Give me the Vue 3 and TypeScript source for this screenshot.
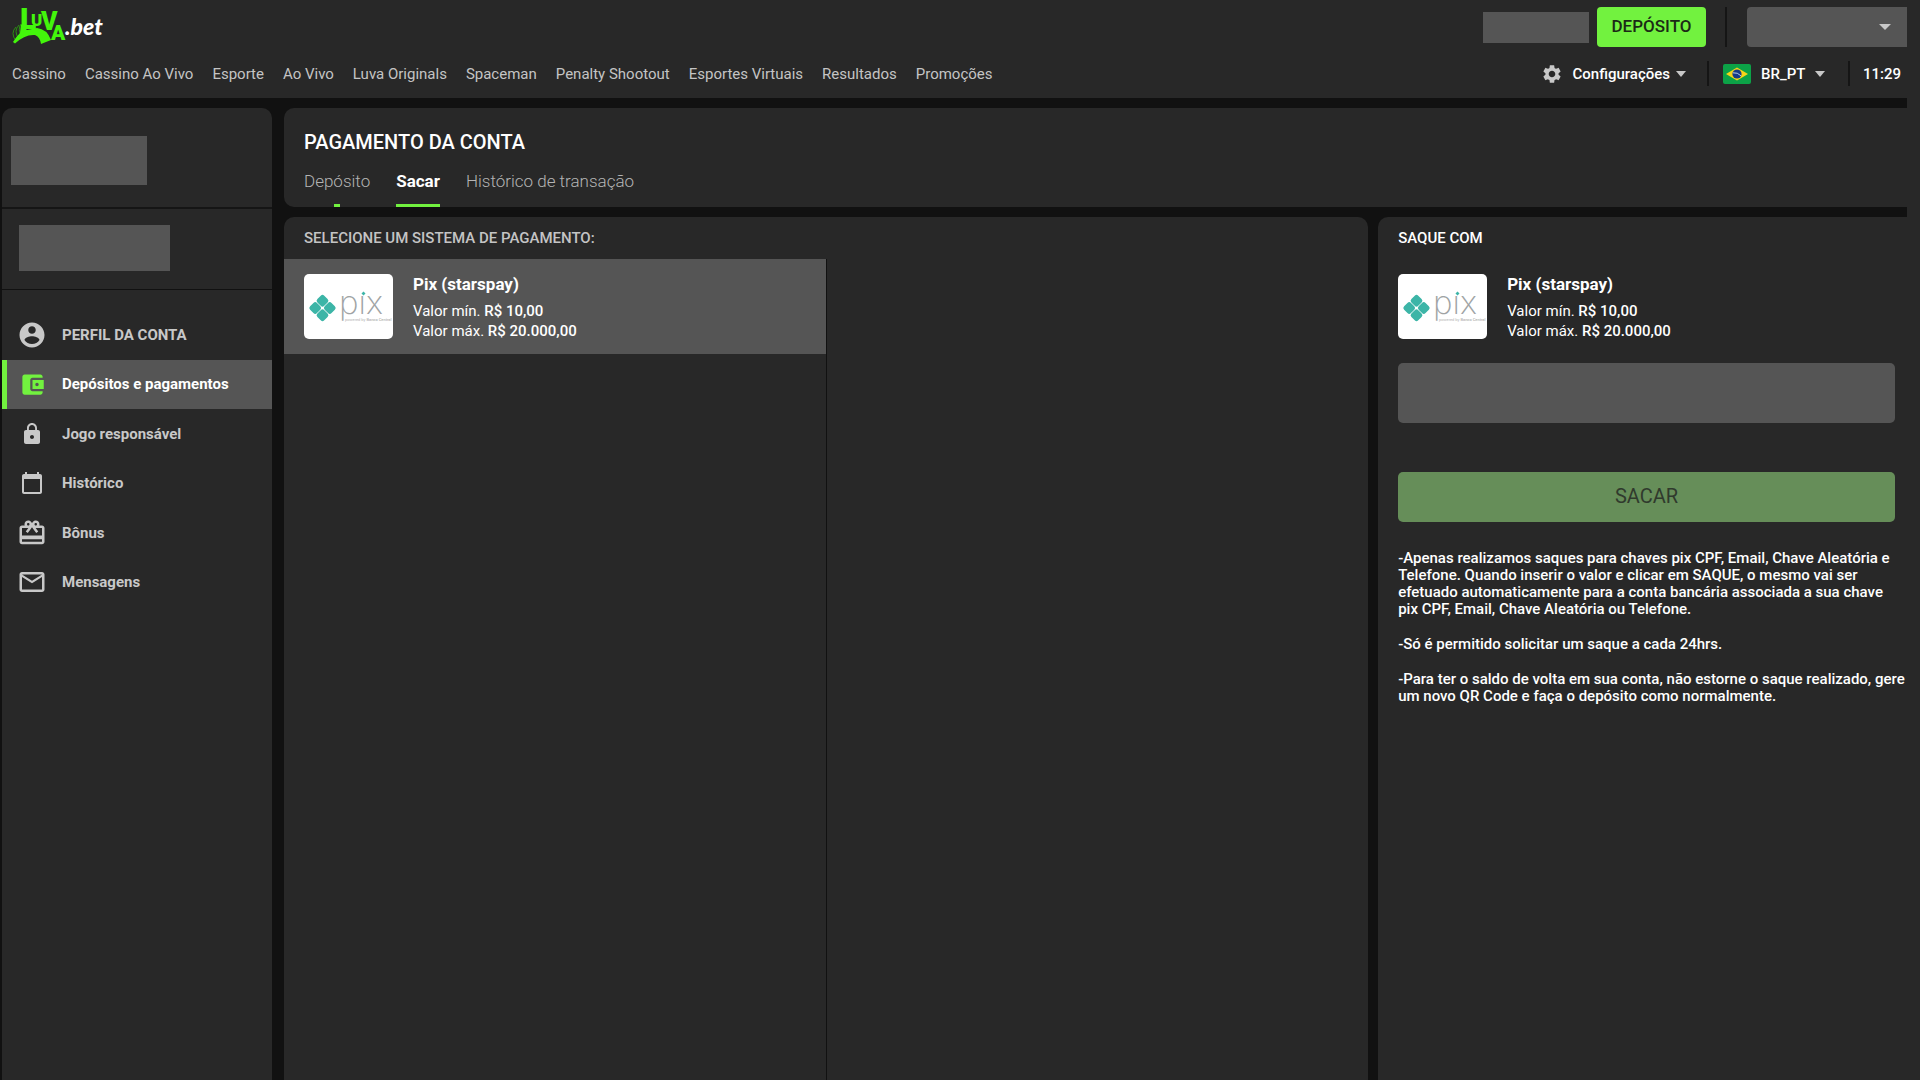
<script setup lang="ts">
import { ref } from 'vue'

interface MenuItem {
  label: string
  size: number
  path: string
  active?: boolean
}

const navLinks: string[] = [
  'Cassino',
  'Cassino Ao Vivo',
  'Esporte',
  'Ao Vivo',
  'Luva Originals',
  'Spaceman',
  'Penalty Shootout',
  'Esportes Virtuais',
  'Resultados',
  'Promoções',
]

const menu: MenuItem[] = [
  {
    label: 'PERFIL DA CONTA',
    size: 30,
    path: 'M12 2C6.48 2 2 6.48 2 12s4.48 10 10 10 10-4.48 10-10S17.52 2 12 2zm0 3c1.66 0 3 1.34 3 3s-1.34 3-3 3-3-1.34-3-3 1.34-3 3-3zm0 14.2c-2.5 0-4.71-1.28-6-3.22.03-1.99 4-3.08 6-3.08 1.99 0 5.97 1.09 6 3.08-1.29 1.94-3.5 3.22-6 3.22z',
  },
  {
    label: 'Depósitos e pagamentos',
    size: 27,
    active: true,
    path: 'M21 18v1c0 1.1-.9 2-2 2H5c-1.11 0-2-.9-2-2V5c0-1.1.89-2 2-2h14c1.1 0 2 .9 2 2v1h-9c-1.11 0-2 .9-2 2v8c0 1.1.89 2 2 2h9zm-9-2h10V8H12v8zm4-2.5c-.83 0-1.5-.67-1.5-1.5s.67-1.5 1.5-1.5 1.5.67 1.5 1.5-.67 1.5-1.5 1.5z',
  },
  {
    label: 'Jogo responsável',
    size: 24,
    path: 'M18 8h-1V6c0-2.76-2.24-5-5-5S7 3.24 7 6v2H6c-1.1 0-2 .9-2 2v10c0 1.1.9 2 2 2h12c1.1 0 2-.9 2-2V10c0-1.1-.9-2-2-2zm-6 9c-1.1 0-2-.9-2-2s.9-2 2-2 2 .9 2 2-.9 2-2 2zm3.1-9H8.9V6c0-1.71 1.39-3.1 3.1-3.1 1.71 0 3.1 1.39 3.1 3.1v2z',
  },
  {
    label: 'Histórico',
    size: 24,
    path: 'M20 3h-1V1h-2v2H7V1H5v2H4c-1.1 0-2 .9-2 2v16c0 1.1.9 2 2 2h16c1.1 0 2-.9 2-2V5c0-1.1-.9-2-2-2zm0 18H4V8h16v13z',
  },
  {
    label: 'Bônus',
    size: 30,
    path: 'M20 6h-2.18c.11-.31.18-.65.18-1 0-1.66-1.34-3-3-3-1.05 0-1.96.54-2.5 1.35l-.5.67-.5-.68C10.96 2.54 10.05 2 9 2 7.34 2 6 3.34 6 5c0 .35.07.69.18 1H4c-1.11 0-1.99.89-1.99 2L2 19c0 1.11.89 2 2 2h16c1.11 0 2-.89 2-2V8c0-1.11-.89-2-2-2zm-5-2c.55 0 1 .45 1 1s-.45 1-1 1-1-.45-1-1 .45-1 1-1zM9 4c.55 0 1 .45 1 1s-.45 1-1 1-1-.45-1-1 .45-1 1-1zm11 15H4v-2h16v2zm0-5H4V8h5.08L7 10.83 8.62 12 11 8.76l1-1.36 1 1.36L15.38 12 17 10.83 14.92 8H20v6z',
  },
  {
    label: 'Mensagens',
    size: 30,
    path: 'M20 4H4c-1.1 0-1.99.9-1.99 2L2 18c0 1.1.9 2 2 2h16c1.1 0 2-.9 2-2V6c0-1.1-.9-2-2-2zm0 14H4V8l8 5 8-5v10zm-8-7L4 6h16l-8 5z',
  },
]

const tabs: string[] = ['Depósito', 'Sacar', 'Histórico de transação']
const activeTab = ref('Sacar')
const language = ref('BR_PT')
const amount = ref('')
</script>

<template>
  <div class="shell">
    <svg class="defs" width="0" height="0" aria-hidden="true">
      <symbol id="pix-logo" viewBox="0 0 89 65">
        <g fill="#3cb5a7" transform="translate(18.5 34) rotate(45)">
          <rect x="-10" y="-10" width="9.7" height="9.7" rx="2.5" />
          <rect x="0.3" y="-10" width="9.7" height="9.7" rx="2.5" />
          <rect x="-10" y="0.3" width="9.7" height="9.7" rx="2.5" />
          <rect x="0.3" y="0.3" width="9.7" height="9.7" rx="2.5" />
        </g>
        <text x="35" y="40" font-family="Inter, sans-serif" font-size="33" font-weight="200" fill="#a0a4a5">pix</text>
        <rect x="56" y="10" width="8" height="11" fill="#fff" />
        <path d="M59.500 17.600l2 1.900-2 1.900-2-1.900z" fill="#3cb5a7" />
        <text x="41" y="47" font-size="4" fill="#b4b4b4">powered by <tspan font-weight="500">Banco Central</tspan></text>
      </symbol>
    </svg>

    <header class="header">
      <div class="top-row">
        <a class="logo" href="#" aria-label="Luva.bet">
          <svg width="92" height="42" viewBox="0 0 92 42" aria-hidden="true">
            <g fill="none" stroke="#2c8f12" stroke-width="1">
              <path d="M5 37Q-1 29 5 23" />
              <path d="M8 35Q2 27 8 21" />
              <path d="M11 33Q6 25 10 20" />
            </g>
            <path fill="#43f60b" d="M10 20l-1 9Q5 33 2 38l2 1.500Q14 30 24 31Q29 33 30 40L40 36Q36 25 26 24L16 26z" />
            <text class="mark" x="9" y="25"><tspan font-size="30">L</tspan><tspan x="20" y="22" font-size="17">U</tspan><tspan x="30" y="26" font-size="25">V</tspan><tspan x="40" y="36" font-size="21">A</tspan></text>
            <text class="tld" x="54" y="31" font-size="23">.bet</text>
          </svg>
        </a>
        <div class="account">
          <span class="balance"></span>
          <button class="deposit" type="button">DEPÓSITO</button>
          <span class="rule tall"></span>
          <button class="user" type="button" aria-label="Conta"><span class="caret large"></span></button>
        </div>
      </div>
      <div class="nav-row">
        <nav class="nav">
          <a v-for="link in navLinks" :key="link" href="#">{{ link }}</a>
        </nav>
        <div class="prefs">
          <button class="settings" type="button">
            <svg width="22" height="22" viewBox="0 0 24 24" fill="#c8c8c8" aria-hidden="true">
              <path d="M19.14 12.94c.04-.3.06-.61.06-.94 0-.32-.02-.64-.07-.94l2.03-1.58c.18-.14.23-.41.12-.61l-1.92-3.32c-.12-.22-.37-.29-.59-.22l-2.39.96c-.5-.38-1.03-.7-1.62-.94l-.36-2.54c-.04-.24-.24-.41-.48-.41h-3.84c-.24 0-.43.17-.47.41l-.36 2.54c-.59.24-1.13.57-1.62.94l-2.39-.96c-.22-.08-.47 0-.59.22L2.74 8.87c-.12.21-.08.47.12.61l2.03 1.58c-.05.3-.09.63-.09.94s.02.64.07.94l-2.03 1.58c-.18.14-.23.41-.12.61l1.92 3.32c.12.22.37.29.59.22l2.39-.96c.5.38 1.03.7 1.62.94l.36 2.54c.05.24.24.41.48.41h3.84c.24 0 .44-.17.47-.41l.36-2.54c.59-.24 1.13-.56 1.62-.94l2.39.96c.22.08.47 0 .59-.22l1.92-3.32c.12-.22.07-.47-.12-.61l-2.01-1.58zM12 15.6c-1.98 0-3.6-1.62-3.6-3.6s1.62-3.6 3.6-3.6 3.6 1.62 3.6 3.6-1.62 3.6-3.6 3.6z" />
            </svg>
            <span>Configurações</span>
            <span class="caret"></span>
          </button>
          <span class="rule"></span>
          <label class="language">
            <svg width="28" height="20" viewBox="0 0 28 20" aria-hidden="true">
              <rect width="28" height="20" rx="2" fill="#0ca247" />
              <path d="M14 3.5L25 10 14 16.5 3 10z" fill="#f6d418" />
              <circle cx="14" cy="10" r="4.6" fill="#173a86" />
              <path d="M9.8 8.8q4.8-.6 8.2 3" fill="none" stroke="#b9cbe6" stroke-width="1" />
            </svg>
            <select v-model="language" aria-label="Idioma">
              <option>BR_PT</option>
            </select>
            <span class="caret"></span>
          </label>
          <span class="rule"></span>
          <time class="clock">11:29</time>
        </div>
      </div>
    </header>

    <div class="body">
      <aside class="sidebar">
        <div class="profile"><span class="profile-mask"></span></div>
        <div class="wallet"><span class="wallet-mask"></span></div>
        <nav class="menu">
          <a v-for="item in menu" :key="item.label" href="#" :class="{ active: item.active }">
            <span class="menu-icon">
              <svg :width="item.size" :height="item.size" viewBox="0 0 24 24" fill="currentColor" aria-hidden="true">
                <path :d="item.path" />
              </svg>
            </span>
            <span>{{ item.label }}</span>
          </a>
        </nav>
      </aside>

      <main class="main">
        <section class="heading">
          <h1>PAGAMENTO DA CONTA</h1>
          <div class="tabs">
            <button
              v-for="tab in tabs"
              :key="tab"
              type="button"
              :class="{ current: tab === activeTab, leaving: tab === 'Depósito' && activeTab === 'Sacar' }"
              @click="activeTab = tab"
            >{{ tab }}</button>
          </div>
        </section>

        <div class="columns">
          <section class="systems">
            <h2>SELECIONE UM SISTEMA DE PAGAMENTO:</h2>
            <div class="system-list">
              <button class="method selected" type="button">
                <svg class="pix" width="89" height="65" aria-hidden="true"><use href="#pix-logo" /></svg>
                <span class="method-info">
                  <strong>Pix (starspay)</strong>
                  <span>Valor mín. <b>R$ 10,00</b></span>
                  <span>Valor máx. <b>R$ 20.000,00</b></span>
                </span>
              </button>
            </div>
          </section>

          <section class="withdraw">
            <h2>SAQUE COM</h2>
            <div class="method">
              <svg class="pix" width="89" height="65" aria-hidden="true"><use href="#pix-logo" /></svg>
              <div class="method-info">
                <strong>Pix (starspay)</strong>
                <span>Valor mín. <b>R$ 10,00</b></span>
                <span>Valor máx. <b>R$ 20.000,00</b></span>
              </div>
            </div>
            <input v-model="amount" class="amount" type="text" inputmode="decimal" aria-label="Valor" />
            <button class="submit" type="button" disabled>SACAR</button>
            <div class="notes">
              <p>-Apenas realizamos saques para chaves pix CPF, Email, Chave Aleatória e Telefone. Quando inserir o valor e clicar em SAQUE, o mesmo vai ser efetuado automaticamente para a conta bancária associada a sua chave<br>pix CPF, Email, Chave Aleatória ou Telefone.</p>
              <p>-Só é permitido solicitar um saque a cada 24hrs.</p>
              <p>-Para ter o saldo de volta em sua conta, não estorne o saque realizado, gere um novo QR Code e faça o depósito como normalmente.</p>
            </div>
          </section>
        </div>
      </main>
    </div>
  </div>
</template>

<style>
body {
  background: #282828;
}
</style>

<style scoped>
.shell {
  display: flex;
  flex-direction: column;
  min-height: 100vh;
  margin-right: 13px;
  background: #111;
  color: #fff;
  font-family: Roboto, "Liberation Sans", sans-serif;
  font-size: 15px;
}
.defs {
  position: absolute;
}
.shell * {
  box-sizing: border-box;
}
a {
  color: inherit;
  text-decoration: none;
}
button,
select,
input {
  margin: 0;
  padding: 0;
  border: 0;
  background: none;
  color: inherit;
  font: inherit;
}
h1,
h2,
p {
  margin: 0;
}

.header {
  height: 98px;
  background: #282828;
}
.top-row,
.nav-row {
  display: flex;
  justify-content: space-between;
}
.top-row {
  height: 50px;
}
.nav-row {
  height: 47px;
  align-items: center;
}
.logo {
  margin: 4px 0 0 11px;
}
.logo svg {
  overflow: visible;
}
.mark {
  fill: #43f60b;
  font-weight: 900;
}
.tld {
  fill: #fff;
  font-family: Lato, sans-serif;
  font-weight: 900;
  font-style: italic;
}
.account {
  display: flex;
  align-items: center;
  height: 40px;
  margin-top: 7px;
}
.balance {
  width: 106px;
  height: 31px;
  margin-right: 8px;
  background: #555;
}
.deposit {
  width: 109px;
  height: 40px;
  padding-bottom: 2px;
  border-radius: 4px;
  background: #72f23f;
  color: #1c2a16;
  font-size: 17px;
  font-weight: 500;
}
.rule {
  width: 2px;
  height: 25px;
  background: #151515;
}
.rule.tall {
  height: 40px;
  margin: 0 20px 0 19px;
}
.user {
  display: flex;
  align-items: center;
  justify-content: flex-end;
  width: 160px;
  height: 40px;
  padding-right: 16px;
  border-radius: 4px 0 0 4px;
  background: #555;
}
.caret {
  border: 5px solid transparent;
  border-top: 6px solid #c8c8c8;
  border-bottom: 0;
}
.caret.large {
  border-width: 6px 6px 0;
}
.nav {
  display: flex;
  gap: 19px;
  padding-left: 12px;
  color: #c4c4c4;
}
.prefs {
  display: flex;
  align-items: center;
  font-weight: 500;
}
.settings,
.language {
  display: flex;
  align-items: center;
}
.settings {
  gap: 10px;
  padding-right: 21px;
}
.settings .caret {
  margin-left: -4px;
}
.language {
  gap: 10px;
  padding: 0 23px 0 14px;
}
.language select {
  appearance: none;
}
.language .caret {
  margin-left: -1px;
}
.clock {
  width: 57px;
  padding-left: 13px;
}

.body {
  display: flex;
  flex: 1;
  gap: 12px;
  padding: 10px 0 0 2px;
}
.sidebar {
  flex: 0 0 270px;
  border-radius: 10px 10px 0 0;
  background: #282828;
}
.profile,
.wallet {
  display: flex;
  align-items: flex-start;
}
.profile {
  height: 101px;
  padding: 28px 0 0 9px;
  border-bottom: 2px solid #151515;
}
.profile-mask {
  width: 136px;
  height: 49px;
  background: #555;
}
.wallet {
  height: 81px;
  padding: 16px 0 0 17px;
  border-bottom: 1px solid #111;
}
.wallet-mask {
  width: 151px;
  height: 46px;
  background: #555;
}
.menu {
  display: flex;
  flex-direction: column;
  height: 297px;
  margin-top: 20px;
  color: #c8c8c8;
}
.menu a {
  display: flex;
  flex: 1;
  align-items: center;
  gap: 15px;
  padding-left: 15px;
  font-weight: 700;
}
.menu a.active {
  padding-left: 10px;
  border-left: 5px solid #72f23f;
  background: #555;
  color: #fff;
}
.menu-icon {
  display: flex;
  justify-content: center;
  width: 30px;
}
.menu a.active .menu-icon {
  color: #72f23f;
}

.main {
  display: flex;
  flex: 1;
  flex-direction: column;
  gap: 10px;
  min-width: 0;
}
.heading {
  height: 99px;
  padding: 22px 20px 0;
  border-radius: 10px 0 0 10px;
  background: #282828;
}
h1 {
  font-size: 20px;
  font-weight: 500;
  line-height: 24px;
}
.tabs {
  display: flex;
  gap: 26px;
  height: 53px;
}
.tabs button {
  position: relative;
  height: 53px;
  color: #b4b4b4;
  font-size: 17px;
  font-weight: 300;
}
.tabs button.current {
  color: #fff;
  font-weight: 700;
}
.tabs .current::after,
.tabs .leaving::after {
  position: absolute;
  right: 0;
  bottom: 0;
  left: 0;
  height: 3px;
  background: #72f23f;
  content: "";
}
.tabs .leaving::after {
  right: 45%;
  left: 45%;
}
.columns {
  display: grid;
  flex: 1;
  grid-template-columns: 41fr 20fr;
  gap: 10px;
}
.systems,
.withdraw {
  display: flex;
  flex-direction: column;
  border-radius: 10px 10px 0 0;
  background: #282828;
}
.withdraw {
  padding: 0 12px 0 20px;
  border-radius: 10px 0 0 0;
}
h2 {
  height: 42px;
  font-size: 15px;
  font-weight: 500;
  line-height: 42px;
}
.systems h2 {
  padding-left: 20px;
  color: #c4c4c4;
}
.system-list {
  flex: 1;
  width: calc(50% + 1px);
  border-right: 1px solid #111;
}
.method {
  display: flex;
  align-items: center;
  gap: 20px;
  height: 95px;
  text-align: left;
}
.method.selected {
  width: 100%;
  padding-left: 20px;
  background: #555;
}
.pix {
  border-radius: 5px;
  background: #fff;
}
.method-info {
  display: flex;
  flex-direction: column;
  line-height: 20px;
}
.method-info strong {
  margin-bottom: 6px;
  font-size: 17px;
  font-weight: 700;
  line-height: 22px;
}
.method-info b {
  font-weight: 500;
}
.amount {
  width: 100%;
  height: 60px;
  margin-top: 9px;
  padding: 0 18px;
  border-radius: 5px;
  background: #555;
}
.submit {
  height: 50px;
  margin-top: 49px;
  padding-bottom: 2px;
  border-radius: 5px;
  background: #668e59;
  color: #303a2d;
  font-size: 20px;
}
.notes {
  display: flex;
  flex-direction: column;
  gap: 18px;
  margin: 28px -12px 0 0;
  font-weight: 500;
  line-height: 17px;
}
</style>
